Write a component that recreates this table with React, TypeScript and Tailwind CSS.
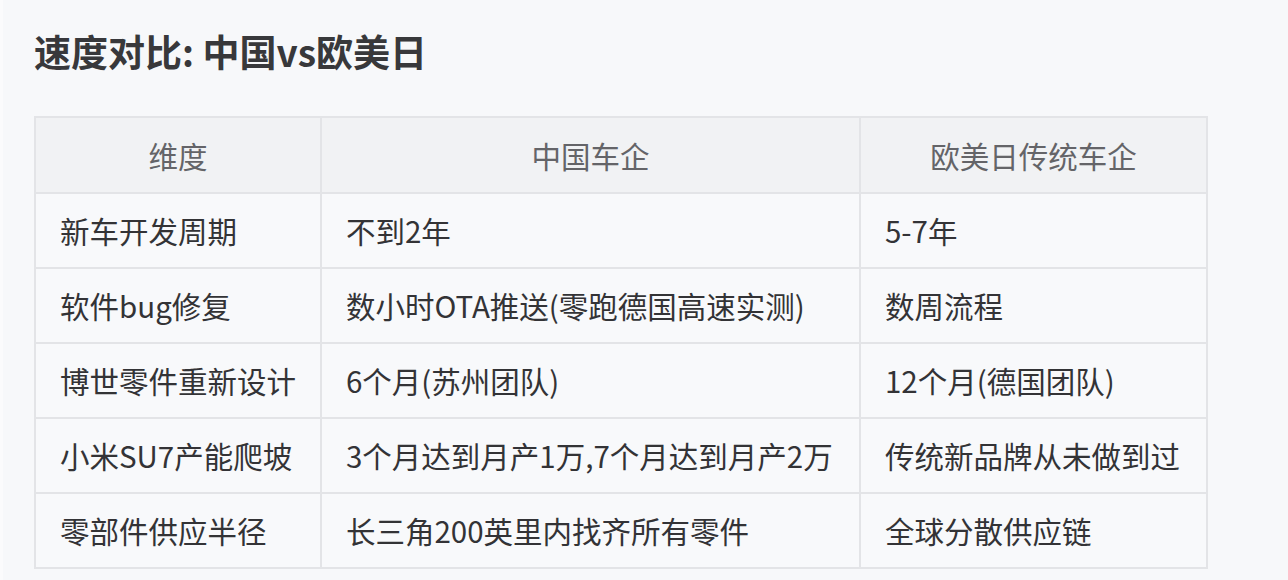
const rows = [
  ["新车开发周期", "不到2年", "5-7年"],
  ["软件bug修复", "数小时OTA推送(零跑德国高速实测)", "数周流程"],
  ["博世零件重新设计", "6个月(苏州团队)", "12个月(德国团队)"],
  ["小米SU7产能爬坡", "3个月达到月产1万,7个月达到月产2万", "传统新品牌从未做到过"],
  ["零部件供应半径", "长三角200英里内找齐所有零件", "全球分散供应链"],
];

const App = () => {
  return (
    <div
      className="w-[1288px] h-[580px] overflow-hidden bg-[#f7f8fa] border-l-[3px] border-[#fbfbfc] pl-[31px] pt-[27px]"
      style={{ fontFamily: '"Noto Sans CJK SC", "Noto Sans", sans-serif' }}
    >
      <h2 className="text-[37px] leading-[48px] font-bold text-[#38383b]">
        速度对比: 中国vs欧美日
      </h2>
      <table className="mt-[41px] w-[1172px] table-fixed border-collapse bg-[#f8f9fb] text-[29.5px]">
        <colgroup>
          <col className="w-[286px]" />
          <col className="w-[539px]" />
          <col className="w-[347px]" />
        </colgroup>
        <thead>
          <tr className="bg-[#f1f2f4]">
            {["维度", "中国车企", "欧美日传统车企"].map((h) => (
              <th
                key={h}
                className="h-[76px] border-2 border-[#e3e4e7] text-center font-normal text-[#646468]"
              >
                {h}
              </th>
            ))}
          </tr>
        </thead>
        <tbody>
          {rows.map((r, i) => (
            <tr key={i}>
              {r.map((c, j) => (
                <td
                  key={j}
                  className="h-[75px] border-2 border-[#e3e4e7] px-[24px] text-[#333336] whitespace-nowrap"
                >
                  {c}
                </td>
              ))}
            </tr>
          ))}
        </tbody>
      </table>
    </div>
  );
};

export default App;
